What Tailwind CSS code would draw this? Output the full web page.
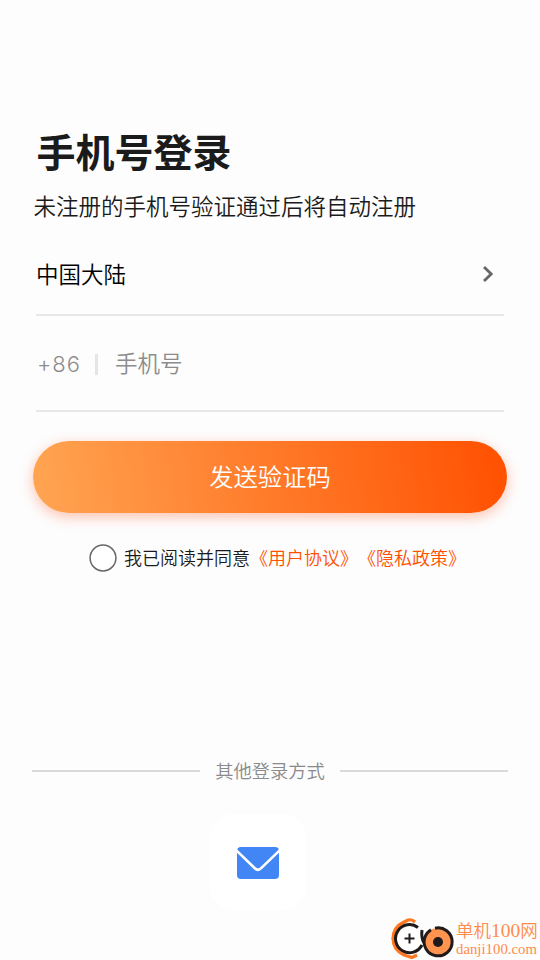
<!DOCTYPE html>
<html lang="zh-CN">
<head>
<meta charset="UTF-8">
<title>手机号登录</title>
<script src="https://cdn.jsdelivr.net/npm/@tailwindcss/browser@4"></script>
</head>
<body class="bg-[#fdfdfd]">
<main class="relative flex h-[960px] w-[540px] flex-col overflow-hidden whitespace-nowrap bg-[#fdfdfd] pt-[121px] font-['Noto_Sans_CJK_SC',sans-serif] font-[350] text-[#1b1b1b]">
  <h1 class="ml-[36.5px] h-[58px] text-[39px] leading-[58px] font-bold">手机号登录</h1>
  <p class="ml-[33.5px] mt-[10px] h-8 text-[22.5px] leading-8">未注册的手机号验证通过后将自动注册</p>
  <div class="mx-9 mt-[13px] flex h-[82px] items-center justify-between border-b-2 border-[#e7e7e7] text-[22.5px] text-black">
    <span class="pb-px">中国大陆</span>
    <svg class="mr-[10px] mb-px h-[18px] w-3" viewBox="0 0 12 18" fill="none" stroke="#666" stroke-width="2.8"><path d="M2 2l7.2 7L2 16"/></svg>
  </div>
  <div class="mx-9 flex h-24 items-center border-b-2 border-[#e7e7e7] text-[22.5px] text-[#8c8c8c]">
    <span class="w-[59px] pl-px pt-[3px] font-['Inter',sans-serif] text-[22px] font-light tracking-[1px]">+86</span>
    <span class="mt-[3px] h-[21px] w-[2.5px] bg-[#e5e5e5]"></span>
    <span class="ml-[17.5px]">手机号</span>
  </div>
  <button class="mx-[33px] mt-[29px] h-[72px] shrink-0 rounded-full bg-[linear-gradient(81deg,#ffa553,#ff5000)] pb-[2px] text-[24.3px] font-[350] text-white shadow-[0_4px_14px_#ff400050]">发送验证码</button>
  <div class="ml-[89px] mt-[30px] flex h-[29px] items-center text-[18px] [text-spacing-trim:space-all]">
    <svg class="size-[28px]" viewBox="0 0 28 28"><circle cx="14" cy="14" r="12.900" fill="#fff" stroke="#686868" stroke-width="1.500"/></svg>
    <span class="ml-[7px]">我已阅读并同意</span><span class="text-[#ff5000]">《用户协议》《隐私政策》</span>
  </div>
  <div class="mx-8 mt-[185px] flex h-7 items-center text-[18.3px] text-[#8a8a8a]">
    <span class="h-[2px] w-[168px] bg-[#dadada]"></span>
    <span class="flex-1 text-center">其他登录方式</span>
    <span class="h-[2px] w-[168px] bg-[#dadada]"></span>
  </div>
  <div class="ml-[210px] mt-[29px] flex h-24 w-24 items-center justify-center rounded-[24px] bg-white">
    <svg class="mt-[2px] h-8 w-[42px]" viewBox="0 0 42 32"><rect width="42" height="32" rx="4" fill="#4285f4"/><path d="M-1 3L17.8 21.2Q21 24.4 24.2 21.2L43 3" fill="none" stroke="#fff" stroke-width="2.6"/></svg>
  </div>
  <div class="absolute left-[389px] top-[914px] flex">
    <svg class="h-[46px] w-[67px]" viewBox="0 0 67 46" fill="none">
      <path d="M4 25Q4 13 15 8L19 6Q23 5 26 8" stroke="#ff781f" stroke-width="3.200"/>
      <path d="M4 24Q4 36 15 41L23 43.5L28 41" stroke="#ff781f" stroke-width="3.200"/>
      <circle cx="20.500" cy="24.500" r="14" fill="#fff"/>
      <path d="M29 13.500A14 14 0 1 0 33 31" stroke="#201a1b" stroke-width="3"/>
      <path d="M20.500 19.500v10M15.500 24.500h10" stroke="#201a1b" stroke-width="2"/>
      <circle cx="49" cy="28" r="14" fill="#ff944f"/>
      <path d="M46 14.200A14 14 0 1 1 36 23Q37.500 18.500 42 15.700M33 16Q32 24 35 29" stroke="#201a1b" stroke-width="3"/>
      <circle cx="49" cy="28" r="5" fill="#201a1b"/>
    </svg>
    <div class="flex flex-col pt-[4px] text-[#ff8c4a]">
      <span class="h-6 text-[17.5px] leading-6">单机<span class="font-['Liberation_Serif',serif] text-[19.5px]">100</span>网</span>
      <span class="h-4 font-['Liberation_Serif',serif] text-[14.8px] leading-[15px] font-normal">danji100.com</span>
    </div>
  </div>
</main>
</body>
</html>
